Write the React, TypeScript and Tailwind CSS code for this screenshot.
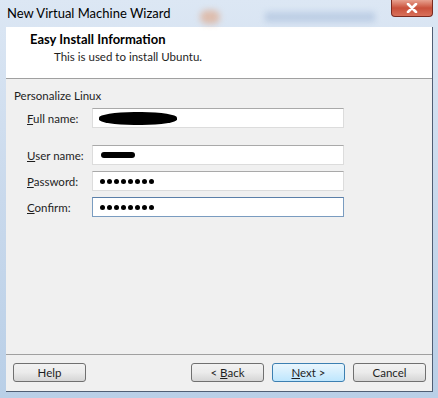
import { ReactNode } from "react";

const font = { fontFamily: '"Segoe UI", Lato, "Open Sans", sans-serif' };

function Field({
  mnemonic,
  rest,
  focused,
  children,
  className = "",
}: {
  mnemonic: string;
  rest: string;
  focused?: boolean;
  children?: ReactNode;
  className?: string;
}) {
  return (
    <div className={`flex items-center ${className}`}>
      <label className="w-[65px] text-[11.5px] text-[#1e1e1e]">
        <span className="underline">{mnemonic}</span>
        {rest}
      </label>
      <div
        className={`relative flex h-[20px] w-[252px] items-center border bg-white pl-[6px] ${
          focused
            ? "border-[#7a9cc0] border-t-[#5b7fa8]"
            : "border-[#dcdcdc] border-t-[#a9a9a9]"
        }`}
      >
        {children}
      </div>
    </div>
  );
}

function Dots() {
  return (
    <div className="flex gap-[2px] pl-[1px]">
      {Array.from({ length: 8 }).map((_, i) => (
        <span key={i} className="h-[5px] w-[5px] rounded-full bg-black" />
      ))}
    </div>
  );
}

function WinButton({
  children,
  primary,
  className = "",
}: {
  children: ReactNode;
  primary?: boolean;
  className?: string;
}) {
  return (
    <button
      className={`h-[19px] w-[73px] rounded-[3px] border text-[11.5px] leading-none text-[#1e1e1e] ${
        primary
          ? "border-[#3c7fb1] bg-gradient-to-b from-[#eaf6fd] to-[#bee6fd]"
          : "border-[#707070] bg-gradient-to-b from-[#f2f2f2] via-[#ebebeb] to-[#d5d5d5]"
      } ${className}`}
    >
      {children}
    </button>
  );
}

export default function App() {
  return (
    <div
      className="h-[398px] w-[438px] overflow-hidden bg-gradient-to-b from-[#dce7f4] via-[#c9d9ec] to-[#b9cfe7]"
      style={font}
    >
      {/* title bar */}
      <div className="relative flex h-[27px] items-center pl-[7px]">
        <span className="text-[13px] text-black">New Virtual Machine Wizard</span>
        <div className="absolute left-[200px] top-[10px] h-[14px] w-[20px] rounded-full bg-[#e0a27f] opacity-60 blur-[3px]" />
        <div className="absolute left-[265px] top-[12px] h-[10px] w-[110px] bg-[#a9bedb] opacity-60 blur-[3px]" />
        <div className="absolute right-[5px] top-0 flex h-[17px] w-[42px] items-center justify-center rounded-b-[4px] border border-t-0 border-[#7a2a20] bg-gradient-to-b from-[#e7a190] via-[#c9503b] to-[#d8705a]">
          <svg width="12" height="10" viewBox="0 0 12 10">
            <path d="M2 1 L10 9 M10 1 L2 9" stroke="#fff" strokeWidth="2.6" strokeLinecap="round" />
          </svg>
        </div>
      </div>

      {/* client area */}
      <div className="ml-[6px] flex h-[365px] w-[427px] flex-col border-r border-b border-[#4f5e74] bg-[#f0f0f0]">
        <div className="h-[52px] border-b border-[#a0a0a0] bg-white pl-[24px] pt-[3px]">
          <div className="text-[13px] leading-[18px] font-bold text-black">Easy Install Information</div>
          <div className="pl-[24px] text-[11.5px] text-[#1e1e1e]">This is used to install Ubuntu.</div>
        </div>

        <div className="flex-1 border-b border-[#a0a0a0] pl-[8px] pt-[8px]">
          <div className="text-[11.5px] text-[#1e1e1e]">Personalize Linux</div>
          <div className="pl-[13px]">
            <Field mnemonic="F" rest="ull name:" className="mt-[4px]">
              <div className="h-[13px] w-[78px] rounded-[45%] bg-black" />
            </Field>
            <Field mnemonic="U" rest="ser name:" className="mt-[17px]">
              <div className="ml-[2px] h-[6px] w-[34px] rounded-full bg-black" />
            </Field>
            <Field mnemonic="P" rest="assword:" className="mt-[6px]">
              <Dots />
            </Field>
            <Field mnemonic="C" rest="onfirm:" focused className="mt-[6px]">
              <Dots />
            </Field>
          </div>
        </div>

        <div className="flex h-[36px] items-start pl-[7px] pt-[8px]">
          <WinButton>Help</WinButton>
          <WinButton className="ml-[105px]">
            &lt; <span className="underline">B</span>ack
          </WinButton>
          <WinButton primary className="ml-[8px]">
            <span className="underline">N</span>ext &gt;
          </WinButton>
          <WinButton className="ml-[8px]">Cancel</WinButton>
        </div>
      </div>
    </div>
  );
}
